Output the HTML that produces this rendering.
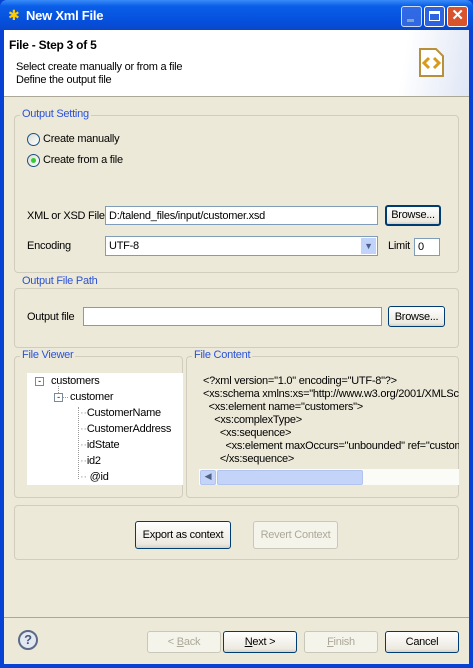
<!DOCTYPE html>
<html><head><style>
*{box-sizing:border-box;margin:0;padding:0}
body{width:473px;height:668px;position:relative;overflow:hidden;font-family:Tahoma,"Liberation Sans",sans-serif;font-size:11px;letter-spacing:-0.25px;color:#000;background:#0842d4}
.a{position:absolute}
.win{left:4px;top:30px;width:465px;height:634px;background:#ECE9D8}
.title{left:0;top:0;width:473px;height:30px;background:linear-gradient(#3a8cf8,#0a5ee8 20%,#0550dd 70%,#0a46c8);border-radius:7px 7px 0 0}
.grp{border:1px solid #d0cdbe;border-radius:4px}
.lab{color:#2a52d8;background:#ECE9D8;padding:0 2px}
.inp{background:#fff;border:1px solid #7f9db9}
.btn{border:1px solid #003c74;border-radius:3px;background:linear-gradient(#fff,#ece9e0 85%,#d6d0c5);text-align:center;line-height:20px}
.dis{border-color:#c9c7ba;color:#aca899;background:#f5f4ea}
.rad{width:13px;height:13px;border:1px solid #1c5180;border-radius:50%;background:linear-gradient(135deg,#dcdcd5,#fff)}
.t{white-space:nowrap}
</style></head><body>
<div class="a title"></div>
<div class="a t" style="left:8px;top:7px;color:#fc0;font-size:14px">✱</div>
<div class="a t" style="left:26px;top:8px;color:#fff;font-weight:bold;font-size:13px">New Xml File</div>
<div class="a" style="left:401px;top:6px;width:21px;height:21px;border:1px solid #fff;border-radius:3px;background:#3b6ee6;opacity:.8"><div class="a" style="left:5px;top:12px;width:7px;height:3px;background:#9bb"></div></div>
<div class="a" style="left:424px;top:6px;width:21px;height:21px;border:1px solid #fff;border-radius:3px;background:#2d63e0"><div class="a" style="left:4px;top:4px;width:11px;height:10px;border:1px solid #fff;border-top-width:3px"></div></div>
<div class="a" style="left:447px;top:6px;width:21px;height:21px;border:1px solid #fff;border-radius:3px;background:#d9532c;color:#fff;font-weight:bold;font-size:15px;line-height:18px;text-align:center">✕</div>
<div class="a win"></div>
<div class="a" style="left:4px;top:30px;width:465px;height:66px;background:linear-gradient(100deg,#fff 85%,#dfe6f5)"></div>
<div class="a" style="left:4px;top:96px;width:465px;height:1px;background:#aca899"></div>
<div class="a t" style="left:9px;top:38px;font-weight:bold;font-size:12px">File - Step 3 of 5</div>
<div class="a t" style="left:16px;top:61px">Select create manually or from a file</div>
<div class="a t" style="left:16px;top:74px">Define the output file</div>
<svg class="a" style="left:419px;top:48px" width="26" height="30"><path d="M1 1H17L24 8V28H1Z" fill="#fff" stroke="#b8903a" stroke-width="2"/><path d="M10 10L5 15L10 20M15 10L20 15L15 20" fill="none" stroke="#d99a1a" stroke-width="3"/></svg>

<div class="a grp" style="left:14px;top:115px;width:445px;height:158px"></div>
<div class="a lab t" style="left:20px;top:108px">Output Setting</div>
<div class="a rad" style="left:27px;top:133px"></div>
<div class="a t" style="left:43px;top:133px">Create manually</div>
<div class="a rad" style="left:27px;top:154px"><div class="a" style="left:3px;top:3px;width:5px;height:5px;border-radius:50%;background:#3c3"></div></div>
<div class="a t" style="left:43px;top:154px">Create from a file</div>
<div class="a t" style="left:27px;top:210px">XML or XSD File</div>
<div class="a inp t" style="left:105px;top:206px;width:273px;height:19px;padding:3px 3px">D:/talend_files/input/customer.xsd</div>
<div class="a btn" style="left:385px;top:205px;width:56px;height:21px;border-width:2px;line-height:17px">Browse...</div>
<div class="a t" style="left:27px;top:240px">Encoding</div>
<div class="a inp t" style="left:105px;top:236px;width:273px;height:20px;padding:3px 3px">UTF-8</div>
<div class="a" style="left:361px;top:238px;width:15px;height:16px;background:#c1d3fb;color:#4d6185;font-size:9px;text-align:center;line-height:16px">▼</div>
<div class="a t" style="left:388px;top:240px">Limit</div>
<div class="a inp t" style="left:414px;top:238px;width:26px;height:18px;padding:2px 3px">0</div>

<div class="a grp" style="left:14px;top:288px;width:445px;height:60px"></div>
<div class="a lab t" style="left:20px;top:275px">Output File Path</div>
<div class="a t" style="left:27px;top:311px">Output file</div>
<div class="a inp" style="left:83px;top:307px;width:299px;height:19px"></div>
<div class="a btn" style="left:388px;top:306px;width:57px;height:21px">Browse...</div>

<div class="a grp" style="left:14px;top:356px;width:169px;height:142px"></div>
<div class="a lab t" style="left:20px;top:349px">File Viewer</div>
<div class="a" style="left:27px;top:373px;width:156px;height:112px;background:#fff"></div>
<div class="a" style="left:78px;top:407px;width:1px;height:72px;border-left:1px dotted #999"></div>
<div class="a" style="left:63px;top:397px;width:5px;height:1px;border-top:1px dotted #999"></div>
<div class="a" style="left:58px;top:386px;width:1px;height:7px;border-left:1px dotted #999"></div>
<div class="a" style="left:35px;top:377px;width:9px;height:9px;border:1px solid #7a8a99;font-size:9px;line-height:6px;text-align:center">-</div>
<div class="a t" style="left:51px;top:375px">customers</div>
<div class="a" style="left:54px;top:393px;width:9px;height:9px;border:1px solid #7a8a99;font-size:9px;line-height:6px;text-align:center">-</div>
<div class="a t" style="left:70px;top:391px">customer</div>
<div class="a t" style="left:80px;top:407px;color:#999">··<span style="color:#000">CustomerName</span></div>
<div class="a t" style="left:80px;top:423px;color:#999">··<span style="color:#000">CustomerAddress</span></div>
<div class="a t" style="left:80px;top:439px;color:#999">··<span style="color:#000">idState</span></div>
<div class="a t" style="left:80px;top:455px;color:#999">··<span style="color:#000">id2</span></div>
<div class="a t" style="left:80px;top:471px;color:#999">··<span style="color:#000"> @id</span></div>

<div class="a grp" style="left:186px;top:356px;width:273px;height:142px"></div>
<div class="a lab t" style="left:192px;top:349px">File Content</div>
<div class="a" style="left:199px;top:372px;width:260px;height:95px;overflow:hidden;line-height:13px">
<div class="t" style="padding:3px 0 0 4px">&lt;?xml version="1.0" encoding="UTF-8"?&gt;<br>&lt;xs:schema xmlns:xs="http://www.w3.org/2001/XMLSchema"&gt;<br>&nbsp;&nbsp;&lt;xs:element name="customers"&gt;<br>&nbsp;&nbsp;&nbsp;&nbsp;&lt;xs:complexType&gt;<br>&nbsp;&nbsp;&nbsp;&nbsp;&nbsp;&nbsp;&lt;xs:sequence&gt;<br>&nbsp;&nbsp;&nbsp;&nbsp;&nbsp;&nbsp;&nbsp;&nbsp;&lt;xs:element maxOccurs="unbounded" ref="customer"/&gt;<br>&nbsp;&nbsp;&nbsp;&nbsp;&nbsp;&nbsp;&lt;/xs:sequence&gt;</div></div>
<div class="a" style="left:199px;top:469px;width:260px;height:16px;background:#fbfbf8"></div>
<div class="a" style="left:200px;top:470px;width:16px;height:15px;background:#c4d4f8;border:1px solid #b0c4ef;border-radius:2px;font-size:9px;text-align:center;color:#4d6185">◀</div>
<div class="a" style="left:217px;top:470px;width:146px;height:15px;background:#c4d4f8;border:1px solid #b0c4ef;border-radius:2px"></div>

<div class="a grp" style="left:14px;top:505px;width:445px;height:55px"></div>
<div class="a btn" style="left:135px;top:521px;width:96px;height:28px;line-height:26px">Export as context</div>
<div class="a btn dis" style="left:253px;top:521px;width:85px;height:28px;line-height:26px">Revert Context</div>

<div class="a" style="left:4px;top:617px;width:465px;height:1px;background:#aca899"></div>
<div class="a" style="left:18px;top:630px;width:20px;height:20px;border:2px solid #5a6a88;border-radius:50%;background:#e4e8f0;color:#4a5a78;font-weight:bold;font-size:13px;text-align:center;line-height:16px">?</div>
<div class="a btn dis" style="left:147px;top:631px;width:74px;height:22px">&lt; <u>B</u>ack</div>
<div class="a btn" style="left:223px;top:631px;width:74px;height:22px"><u>N</u>ext &gt;</div>
<div class="a btn dis" style="left:304px;top:631px;width:74px;height:22px"><u>F</u>inish</div>
<div class="a btn" style="left:385px;top:631px;width:74px;height:22px">Cancel</div>
</body></html>
